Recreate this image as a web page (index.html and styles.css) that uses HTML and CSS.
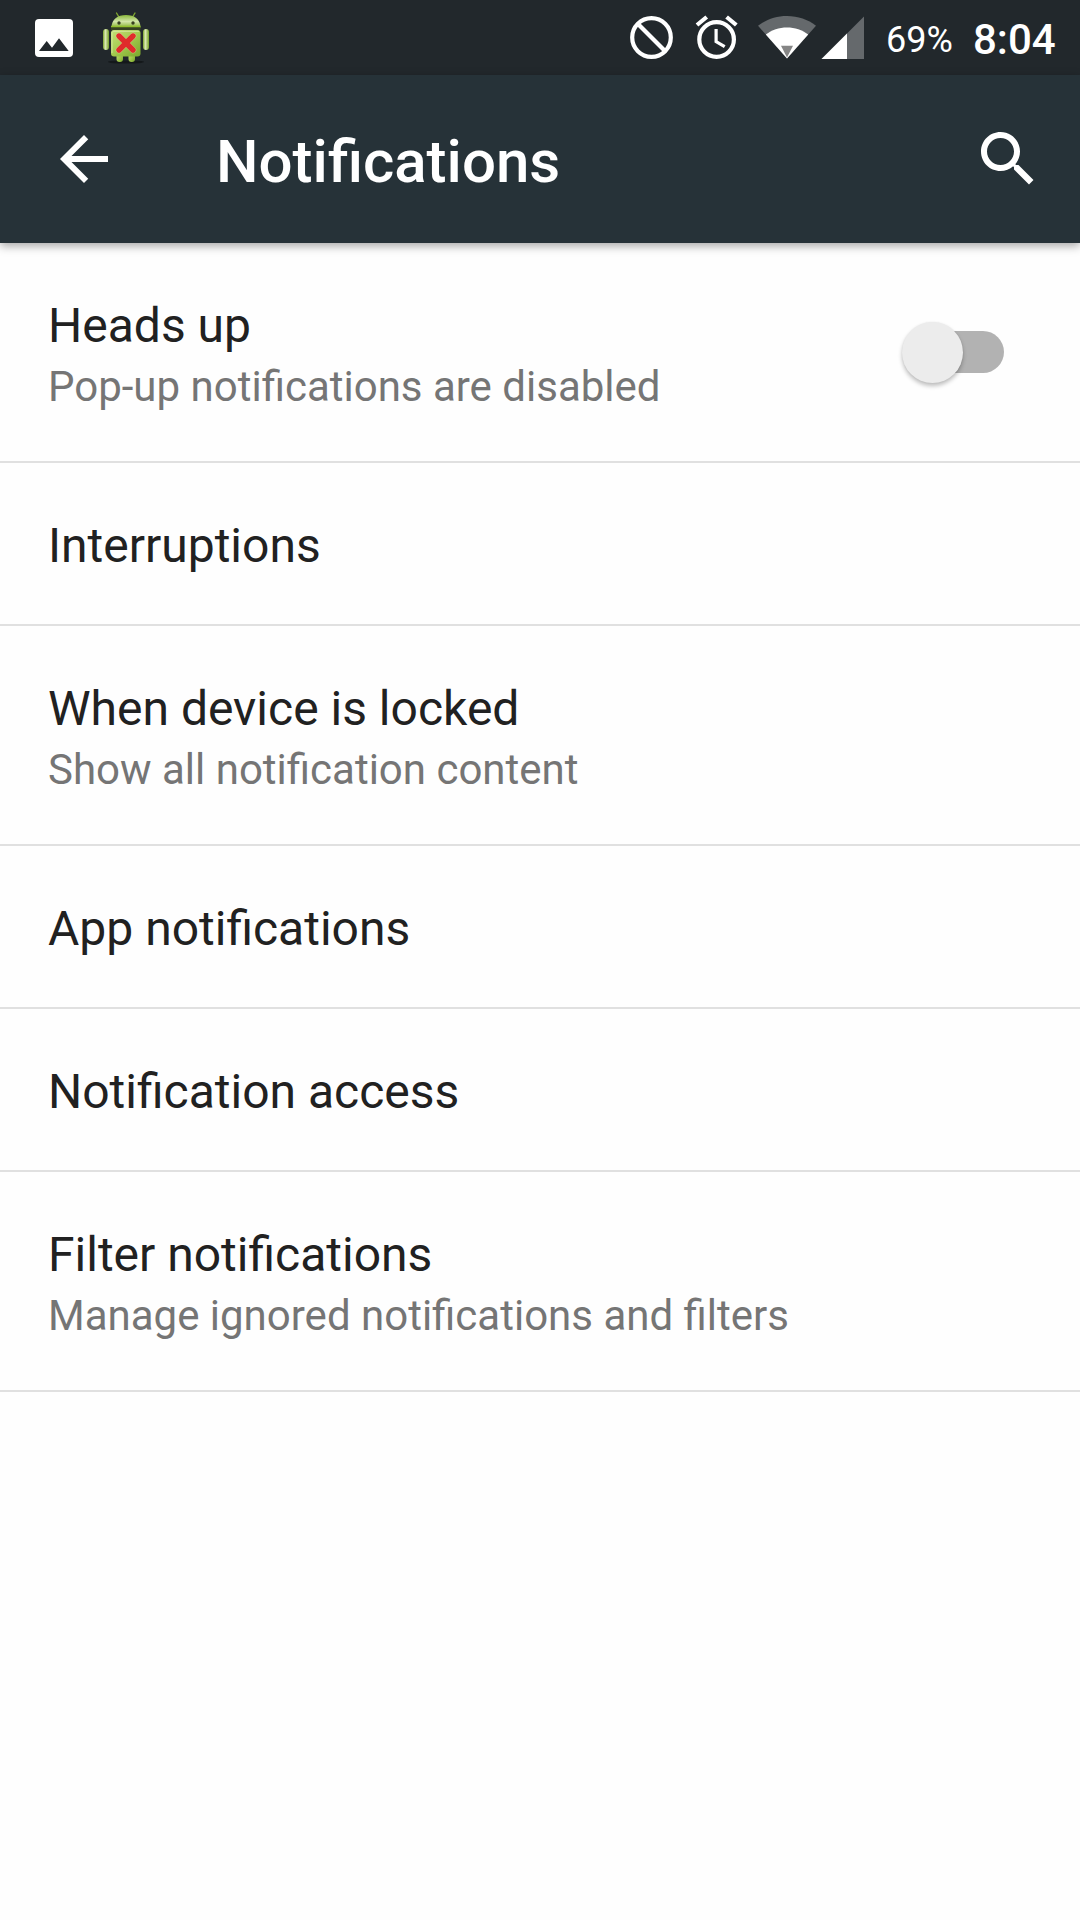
FILE: index.html
```html
<!DOCTYPE html>
<html lang="en">
<head>
<meta charset="utf-8">
<title>Notifications</title>
<link rel="stylesheet" href="styles.css">
</head>
<body>
<div class="screen">
  <div class="status">
    <svg class="photo" width="38" height="75" viewBox="0 0 38 75">
      <rect y="19" width="38" height="38" rx="4" fill="#fff"/>
      <path d="M4 51l7.700-10 5.300 6.700 7-9.400L33.700 51z" fill="#22282c"/>
    </svg>
    <svg class="droid" width="48" height="75" viewBox="102 0 48 75">
      <defs>
        <linearGradient id="body" x1="0" x2="1" y1="0" y2="1">
          <stop offset="0" stop-color="#c5df78"/><stop offset=".5" stop-color="#a3ca4e"/><stop offset="1" stop-color="#7aa82c"/>
        </linearGradient>
        <linearGradient id="head" x1="0" x2="0" y1="0" y2="1">
          <stop offset="0" stop-color="#8bb83c"/><stop offset=".5" stop-color="#d3e6a8"/><stop offset="1" stop-color="#83b02c"/>
        </linearGradient>
        <linearGradient id="arm" x1="0" x2="1" y1="0" y2="0">
          <stop offset="0" stop-color="#7ca52c"/><stop offset=".4" stop-color="#dceab4"/><stop offset="1" stop-color="#75a026"/>
        </linearGradient>
      </defs>
      <ellipse cx="126" cy="62" rx="18" ry="1.600" fill="#14181a"/>
      <path d="M119.500 18l-3-5M132 18l3-5" stroke="#7fa52f" stroke-width="1.400" stroke-linecap="round"/>
      <rect x="116.500" y="52" width="6.500" height="10" rx="3" fill="url(#body)"/>
      <rect x="128.500" y="52" width="6.500" height="10" rx="3" fill="url(#body)"/>
      <rect x="103" y="29" width="6" height="21" rx="3" fill="url(#arm)"/>
      <rect x="143" y="29" width="6" height="21" rx="3" fill="url(#arm)"/>
      <path d="M111.500 28c0-9 6-13 14.500-13s14.500 4 14.500 13z" fill="url(#head)"/>
      <rect x="111" y="27" width="29.500" height="3" fill="#364221"/>
      <path d="M111 26.500h29.500" stroke="#92c02f" stroke-width="1.500"/>
      <rect x="111" y="30" width="29.500" height="26.500" rx="3" fill="url(#body)"/>
      <path d="M112.500 31.300h26.500M112 32v21" stroke="#dcebaa" stroke-width="1" opacity=".8"/>
      <circle cx="119" cy="23" r="1.700" fill="#38401f"/><circle cx="133" cy="23" r="1.700" fill="#38401f"/>
      <path d="M119 36l14 14M133 36l-14 14" stroke="#f1c4a0" stroke-width="6.600" stroke-linecap="round" opacity=".5"/>
      <path d="M119 36l14 14M133 36l-14 14" stroke="#e02b2b" stroke-width="5.400" stroke-linecap="round"/>
    </svg>
    <svg class="block" width="44" height="75" viewBox="630 0 44 75" fill="none" stroke="#fff" stroke-width="4.200">
      <circle cx="651.500" cy="37.500" r="19.300"/><path d="M638 24l27 27"/>
    </svg>
    <svg class="alarm" width="44" height="75" viewBox="695 0 44 75" fill="none" stroke="#fff" stroke-width="4.200">
      <circle cx="716.600" cy="39.500" r="17.300"/>
      <path d="M697 25l9.700-8M736.300 25l-9.700-8"/>
      <path d="M716.100 29v12.600l8.600 5.100" stroke-width="3.200"/>
    </svg>
    <svg class="wifi" width="58" height="75" viewBox="758 0 58 75">
      <path d="M758 25.800C766 19.500 776 16 787 16s21 3.500 29 9.800L787 58.500z" fill="#65696c"/>
      <path d="M765.800 34.500c6-4.500 13.200-7 21.200-7s15.200 2.500 21.200 7L787 58.500z" fill="#fff"/>
      <path d="M781 45.700h12L787 57.500z" fill="#858585"/>
    </svg>
    <svg class="signal" width="43" height="75" viewBox="821 0 43 75">
      <path d="M821.500 59L864 16.500V59z" fill="#65696c"/><path d="M821.500 59L847 33.500V59z" fill="#fff"/>
    </svg>
    <span class="battery">69%</span>
    <span class="clock">8:04</span>
  </div>
  <header class="bar">
    <svg width="72" height="72" viewBox="0 0 24 24" fill="#fff"><path d="M20 11H7.830l5.590-5.590L12 4l-8 8 8 8 1.410-1.410L7.830 13H20z"/></svg>
    <h1>Notifications</h1>
    <svg width="72" height="72" viewBox="0 0 24 24" fill="#fff"><path d="M15.500 14h-.79l-.28-.27C15.410 12.590 16 11.110 16 9.500 16 5.910 13.090 3 9.500 3S3 5.910 3 9.500 5.910 16 9.500 16c1.610 0 3.090-.59 4.230-1.570l.27.28v.79l5 4.990L20.490 19zM9.500 14C7.010 14 5 11.990 5 9.500S7.010 5 9.500 5 14 7.010 14 9.500 11.990 14 9.500 14z"/></svg>
  </header>
  <main>
    <div class="row tall">
      <div class="text"><p class="name">Heads up</p><p class="sub">Pop-up notifications are disabled</p></div>
      <div class="switch"><div class="thumb"></div></div>
    </div>
    <div class="row"><p class="name">Interruptions</p></div>
    <div class="row tall"><div class="text"><p class="name">When device is locked</p><p class="sub">Show all notification content</p></div></div>
    <div class="row"><p class="name">App notifications</p></div>
    <div class="row"><p class="name">Notification access</p></div>
    <div class="row tall"><div class="text"><p class="name">Filter notifications</p><p class="sub">Manage ignored notifications and filters</p></div></div>
  </main>
</div>
</body>
</html>
```
FILE: styles.css
```css
* { box-sizing: border-box; margin: 0; padding: 0; }
body { background: #fefefe; font-family: Roboto, sans-serif; }
svg { display: block; flex: none; }
.screen { width: 1080px; height: 1920px; overflow: hidden; }
.status { display: flex; height: 75px; padding: 0 24px 0 35px; background: #22282c; color: #fff; white-space: nowrap; }
.droid { margin-left: 29px; }
.block { margin-left: auto; }
.alarm { margin-left: 21px; }
.wifi { margin-left: 19px; }
.signal { margin-left: 5px; }
.battery { width: 66px; margin-left: 22px; font-size: 36px; line-height: 80px; }
.clock { width: 83px; margin-left: 21px; font-size: 42px; font-weight: 500; line-height: 79px; }
.bar { display: flex; align-items: center; height: 168px; padding: 0 36px 0 48px; background: #263238; color: #fff; box-shadow: 0 3px 9px rgba(0, 0, 0, .35); }
.bar h1 { flex: 1; margin-left: 96px; font-size: 60px; font-weight: 500; line-height: 70px; padding-top: 5px; }
.row { display: flex; justify-content: space-between; height: 163px; padding: 55px 76px 0 48px; border-bottom: 2px solid #e0e0e0; }
.tall { height: 220px; }
.name { font-size: 48px; line-height: 56px; color: #212121; }
.sub { margin-top: 8px; font-size: 42px; line-height: 49px; color: #757575; }
.switch { width: 102px; height: 42px; margin-top: 33px; display: flex; align-items: center; border-radius: 21px; background: linear-gradient(90deg, transparent 30px, #b2b2b2 30px); }
.thumb { width: 61px; height: 61px; flex: none; border-radius: 50%; background: #ececec; box-shadow: 0 3px 4px rgba(0, 0, 0, .25), 0 0 2px rgba(0, 0, 0, .06); }
```
